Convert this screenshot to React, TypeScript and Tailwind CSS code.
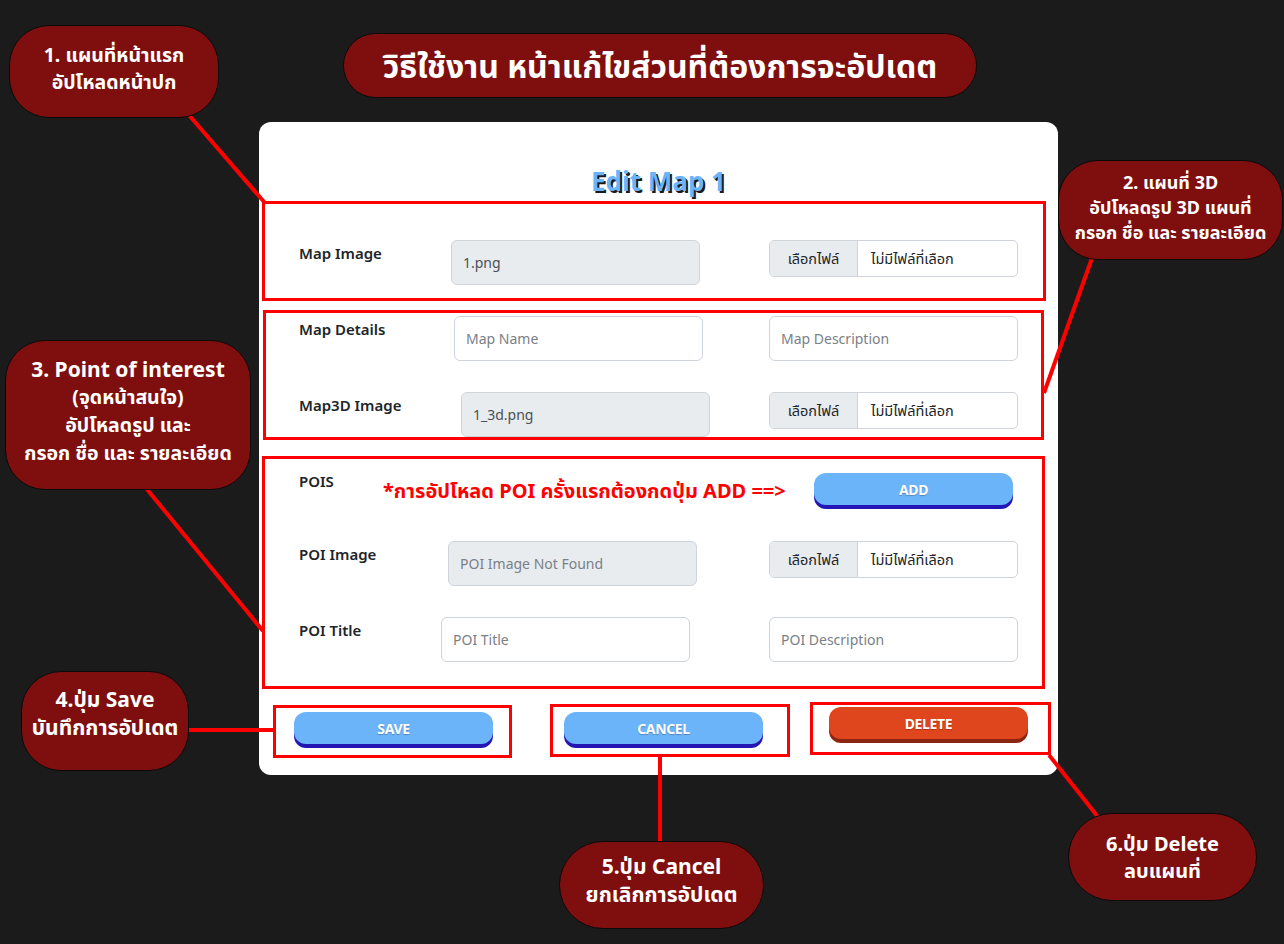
import type { ReactNode } from 'react';

const FONT = { fontFamily: '"Noto Sans", "Noto Sans Thai", "DejaVu Sans", sans-serif' };

type FieldProps = { value?: string; placeholder?: string; disabled?: boolean };

const TextField = ({ value, placeholder, disabled }: FieldProps) => (
  <div
    className={`w-[249px] h-[45px] rounded-[6px] border border-[#ced4da] flex items-center pl-[11px] text-[14px] ${
      disabled ? 'bg-[#e9ecef]' : 'bg-white'
    } ${value ? 'text-[#495057]' : 'text-[#7a8087]'}`}
  >
    {value ?? placeholder}
  </div>
);

const FileField = () => (
  <div className="w-[249px] h-[37px] rounded-[5px] border border-[#ced4da] flex text-[14.5px] text-[#212529] overflow-hidden">
    <div className="w-[88px] bg-[#e9ecef] border-r border-[#ced4da] flex items-center justify-center">เลือกไฟล์</div>
    <div className="flex items-center pl-[13px]">ไม่มีไฟล์ที่เลือก</div>
  </div>
);

const Label = ({ children, w }: { children: ReactNode; w: string }) => (
  <div className={`${w} shrink-0 mt-[2px] text-[15px] leading-[22px] font-semibold text-[#212529]`}>{children}</div>
);

const Callout = ({ className, children }: { className: string; children: ReactNode }) => (
  <div
    className={`absolute bg-[#7f0f0f] border border-[#0a0a0a] flex flex-col items-center justify-center text-center text-white font-bold ${className}`}
  >
    {children}
  </div>
);

const PillButton = ({ label, tone }: { label: string; tone: 'blue' | 'red' }) => (
  <button
    className={`w-[199px] h-[32px] rounded-[12px] text-white font-bold text-[14px] tracking-tight ${
      tone === 'blue' ? 'bg-[#6cb4fa] shadow-[0_4px_0_#2416b4]' : 'bg-[#e0461e] shadow-[0_4px_0_#8b2410]'
    }`}
    style={{ textShadow: '0 1px 1px rgba(0,0,0,0.25)' }}
  >
    {label}
  </button>
);

export default function App() {
  return (
    <div className="min-h-screen bg-[#1b1b1b]" style={FONT}>
      <div className="relative w-[1284px] h-[944px] overflow-hidden pt-[33px]">
        {/* header pill */}
        <div className="ml-[343px] w-[634px] h-[65px] rounded-full bg-[#7f0f0f] border border-[#0a0a0a] flex items-center justify-center text-white text-[32px] font-bold">
          วิธีใช้งาน หน้าแก้ไขส่วนที่ต้องการจะอัปเดต
        </div>

        {/* edit card */}
        <div className="ml-[259px] mt-[24px] w-[799px] h-[653px] bg-white rounded-[12px]">
          <div
            className="h-[79px] pt-[43px] text-center text-[26px] leading-[32px] font-bold text-[#6cb4fa]"
            style={{ textShadow: '2px 2px 0 #1a1a1a' }}
          >
            Edit Map 1
          </div>

          {/* section 1 */}
          <div className="ml-[3px] w-[784px] h-[100px] border-[3px] border-[#ff0000] pt-[36px] pl-[34px] pr-[25px]">
            <div className="flex items-start">
              <Label w="w-[152px]">Map Image</Label>
              <TextField value="1.png" disabled />
              <div className="ml-auto">
                <FileField />
              </div>
            </div>
          </div>

          {/* section 2 */}
          <div className="mt-[9px] ml-[4px] w-[781px] h-[130px] border-[3px] border-[#ff0000] pt-[3px] pl-[33px] pr-[23px]">
            <div className="flex items-start">
              <Label w="w-[155px]">Map Details</Label>
              <TextField placeholder="Map Name" />
              <div className="ml-auto">
                <TextField placeholder="Map Description" />
              </div>
            </div>
            <div className="flex items-start mt-[31px]">
              <Label w="w-[162px]">Map3D Image</Label>
              <TextField value="1_3d.png" disabled />
              <div className="ml-auto">
                <FileField />
              </div>
            </div>
          </div>

          {/* section 3 */}
          <div className="mt-[16px] ml-[3px] w-[783px] h-[233px] border-[3px] border-[#ff0000] pt-[9px] pl-[34px] pr-[24px]">
            <div className="flex items-start h-[45px]">
              <Label w="w-[84px]">POIS</Label>
              <div className="mt-[9px] text-[20px] leading-[28px] font-bold text-[#ff0000] whitespace-nowrap">
                *การอัปโหลด POI ครั้งแรกต้องกดปุ่ม ADD ==&gt;
              </div>
              <div className="ml-auto mr-[5px] mt-[5px]">
                <PillButton label="ADD" tone="blue" />
              </div>
            </div>
            <div className="flex items-start mt-[28px]">
              <Label w="w-[149px]">POI Image</Label>
              <TextField placeholder="POI Image Not Found" disabled />
              <div className="ml-auto">
                <FileField />
              </div>
            </div>
            <div className="flex items-start mt-[31px]">
              <Label w="w-[142px]">POI Title</Label>
              <TextField placeholder="POI Title" />
              <div className="ml-auto">
                <TextField placeholder="POI Description" />
              </div>
            </div>
          </div>

          {/* actions */}
          <div className="flex items-start mt-[13px] ml-[14px]">
            <div className="mt-[3px] w-[239px] h-[53px] border-[3px] border-[#ff0000] pl-[18px] pt-[4px]">
              <PillButton label="SAVE" tone="blue" />
            </div>
            <div className="mt-[2px] ml-[38px] w-[240px] h-[53px] border-[3px] border-[#ff0000] pl-[11px] pt-[5px]">
              <PillButton label="CANCEL" tone="blue" />
            </div>
            <div className="ml-[20px] w-[241px] h-[53px] border-[3px] border-[#ff0000] pl-[16px] pt-[2px]">
              <PillButton label="DELETE" tone="red" />
            </div>
          </div>
        </div>

        {/* connector lines */}
        <svg className="absolute left-0 top-0 pointer-events-none" width="1284" height="944">
          <g stroke="#ff0000" strokeWidth="4">
            <line x1="188" y1="114" x2="265" y2="203" />
            <line x1="1092" y1="258" x2="1044" y2="393" />
            <line x1="146" y1="488" x2="263" y2="631" />
            <line x1="188" y1="730" x2="274" y2="730" />
            <line x1="660" y1="757" x2="660" y2="842" />
            <line x1="1049" y1="755" x2="1102" y2="822" />
          </g>
        </svg>

        {/* annotation callouts */}
        <Callout className="left-[9px] top-[25px] w-[210px] h-[93px] rounded-[40px] text-[19.5px] leading-[27px] pb-[8px]">
          <div>1. แผนที่หน้าแรก</div>
          <div>อัปโหลดหน้าปก</div>
        </Callout>
        <Callout className="left-[1058px] top-[160px] w-[225px] h-[100px] rounded-[40px] text-[18px] leading-[25px] pb-[6px]">
          <div>2. แผนที่ 3D</div>
          <div>อัปโหลดรูป 3D แผนที่</div>
          <div>กรอก ชื่อ และ รายละเอียด</div>
        </Callout>
        <Callout className="left-[5px] top-[340px] w-[246px] h-[150px] rounded-[40px] text-[19.5px] leading-[28px] pb-[8px]">
          <div className="text-[21px]">3. Point of interest</div>
          <div>(จุดหน้าสนใจ)</div>
          <div>อัปโหลดรูป และ</div>
          <div>กรอก ชื่อ และ รายละเอียด</div>
        </Callout>
        <Callout className="left-[21px] top-[671px] w-[168px] h-[100px] rounded-[40px] text-[21px] leading-[28px] pb-[16px]">
          <div>4.ปุ่ม Save</div>
          <div>บันทึกการอัปเดต</div>
        </Callout>
        <Callout className="left-[559px] top-[841px] w-[205px] h-[88px] rounded-[44px] text-[21px] leading-[28px] pb-[10px]">
          <div>5.ปุ่ม Cancel</div>
          <div>ยกเลิกการอัปเดต</div>
        </Callout>
        <Callout className="left-[1068px] top-[813px] w-[189px] h-[88px] rounded-[44px] text-[20px] leading-[27px]">
          <div>6.ปุ่ม Delete</div>
          <div>ลบแผนที่</div>
        </Callout>
      </div>
    </div>
  );
}
